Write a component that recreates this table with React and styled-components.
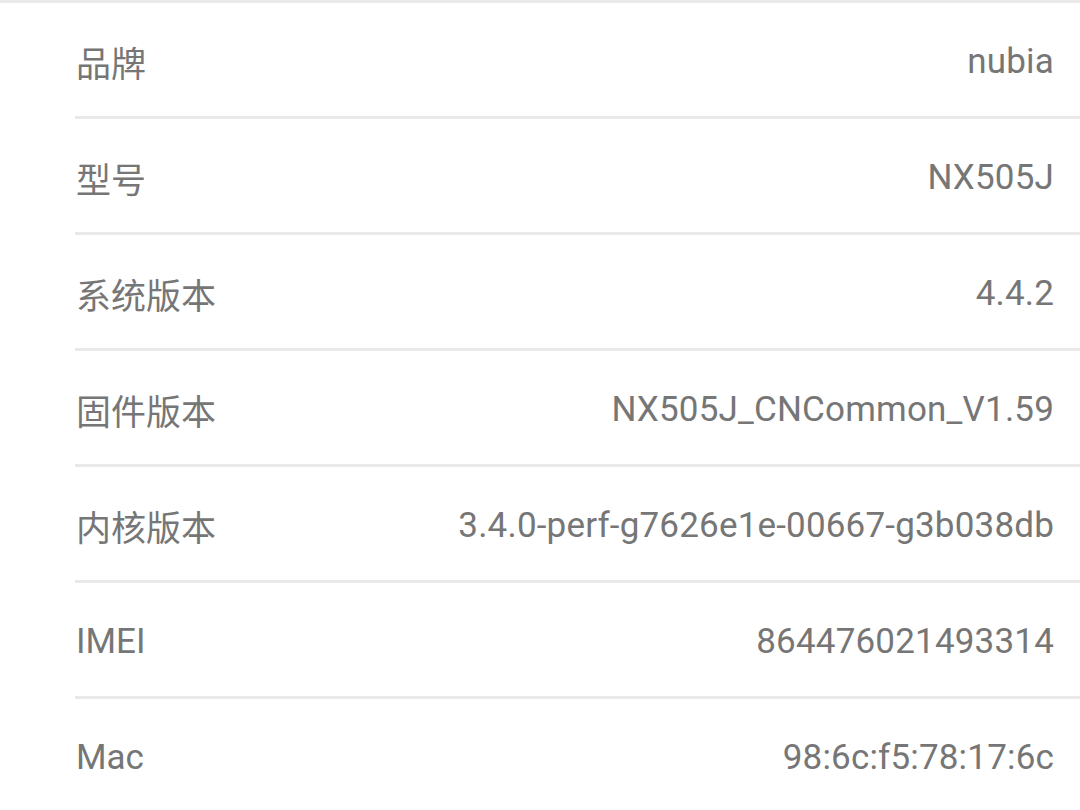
import React from 'react';
import styled, { createGlobalStyle } from 'styled-components';

const GlobalStyle = createGlobalStyle`
  html, body {
    margin: 0;
    padding: 0;
    background: #ffffff;
  }
  body {
    font-family: Roboto, 'Noto Sans CJK SC', sans-serif;
  }
  *, *:before, *:after {
    box-sizing: border-box;
  }
`

const InfoList = styled.ul`
  margin: 0;
  padding: 0;
  list-style: none;
  border-top: 3px solid #e9e9e9;
  height: 810px;
  overflow: hidden;
`

const InfoRow = styled.li`
  margin-left: 75px;
  height: 116px;
  padding: 3px 26px 0 1px;
  display: flex;
  align-items: center;
  justify-content: space-between;
  border-bottom: 3px solid #e9e9e9;
  font-size: 35px;
  color: #767676;
`

const Label = styled.span`
  white-space: nowrap;
`

const Value = styled.span`
  white-space: nowrap;
  text-align: right;
  letter-spacing: 0.18px;
`

const info = [
  ['品牌', 'nubia'],
  ['型号', 'NX505J'],
  ['系统版本', '4.4.2'],
  ['固件版本', 'NX505J_CNCommon_V1.59'],
  ['内核版本', '3.4.0-perf-g7626e1e-00667-g3b038db'],
  ['IMEI', '864476021493314'],
  ['Mac', '98:6c:f5:78:17:6c'],
]

const App = () => (
  <>
    <GlobalStyle />
    <InfoList>
      {info.map(([label, value]) => (
        <InfoRow key={label}>
          <Label>{label}</Label>
          <Value>{value}</Value>
        </InfoRow>
      ))}
    </InfoList>
  </>
)

export default App
